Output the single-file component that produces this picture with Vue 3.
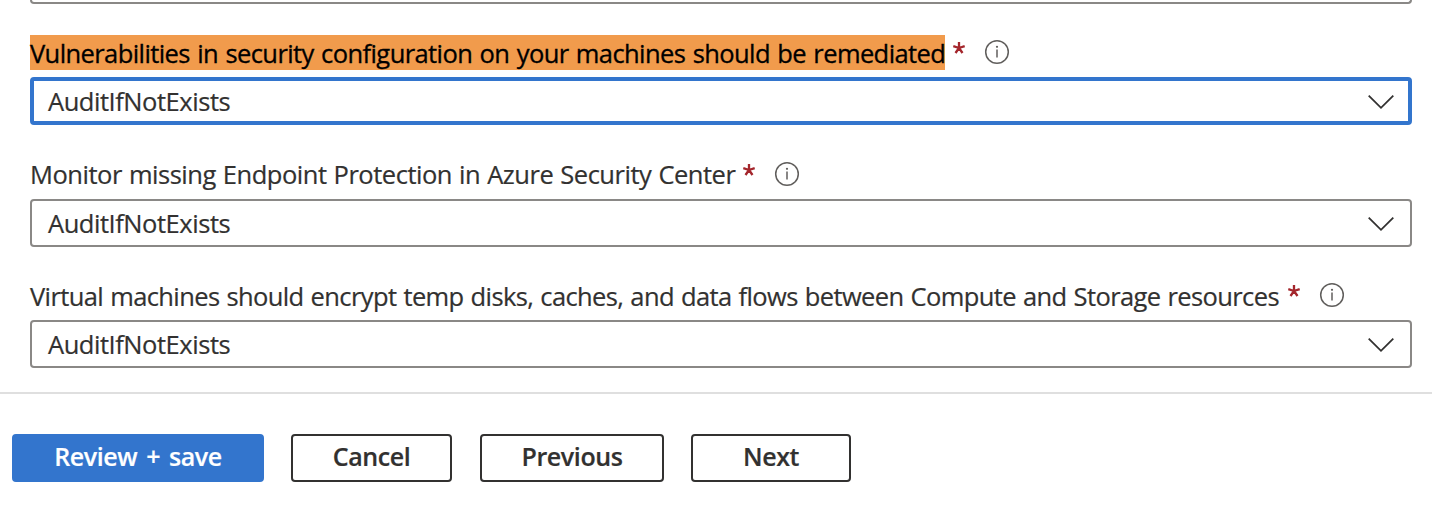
<script setup>
const fields = [
  { id: 'vuln', label: 'Vulnerabilities in security configuration on your machines should be remediated', value: 'AuditIfNotExists', active: true },
  { id: 'endpoint', label: 'Monitor missing Endpoint Protection in Azure Security Center', value: 'AuditIfNotExists' },
  { id: 'disks', label: 'Virtual machines should encrypt temp disks, caches, and data flows between Compute and Storage resources', value: 'AuditIfNotExists' },
]
const buttons = [
  { id: 'save', text: 'Review + save' },
  { id: 'cancel', text: 'Cancel' },
  { id: 'previous', text: 'Previous' },
  { id: 'next', text: 'Next' },
]
</script>

<template>
  <main class="page">
    <section class="form">
      <div class="previous-field"></div>
      <div v-for="f in fields" :key="f.id" class="field" :class="f.id">
        <div class="label-row">
          <span class="label" :class="{ found: f.active }">{{ f.label }}</span>
          <svg class="required" viewBox="0 0 14 14">
            <path d="M7 7V1M7 7L1.3 5.2M7 7L12.7 5.2M7 7L3.5 12M7 7L10.5 12" />
          </svg>
          <svg class="info" viewBox="0 0 26 26">
            <circle cx="13" cy="13" r="11.3" />
            <path d="M13 10.5v7.9" />
            <circle class="dot" cx="13" cy="7.8" r="1.1" />
          </svg>
        </div>
        <div class="select" :class="{ active: f.active }">
          <span class="value">{{ f.value }}</span>
          <svg class="chevron" viewBox="0 0 28 16"><path d="M1.7 1.7L14 13.8L26.3 1.7" /></svg>
        </div>
      </div>
    </section>
    <footer class="footer">
      <button v-for="b in buttons" :key="b.id" class="button" :class="b.id">
        <span>{{ b.text }}</span>
      </button>
    </footer>
  </main>
</template>

<style>
body { background: #fff; }
</style>

<style scoped>
.page {
  height: 506px;
  overflow: hidden;
  background: #fff;
  color: #323130;
  font-family: "Open Sans", "Noto Sans", sans-serif;
  font-size: 25.5px;
}
.form {
  box-sizing: border-box;
  height: 394px;
  padding: 0 20px 0 30px;
  border-bottom: 2px solid #dfdfdf;
}
.previous-field {
  box-sizing: border-box;
  height: 4px;
  border: 2px solid #8a8886;
  border-top: 0;
  border-radius: 0 0 4px 4px;
}
.label-row {
  display: flex;
  height: 35px;
  padding-bottom: 7px;
  white-space: nowrap;
}
.field.vuln { padding-top: 31px; }
.field.endpoint { padding-top: 32px; }
.field.disks { padding-top: 31px; }
.label {
  height: 35px;
  line-height: 36px;
  -webkit-text-stroke: 0.2px currentColor;
}
.found {
  background: #f19b4c;
  color: #000;
  -webkit-text-stroke-width: 0.3px;
}
.vuln .label { width: 915px; letter-spacing: -0.59px; word-spacing: 1.3px; }
.endpoint .label { width: 705px; line-height: 34px; letter-spacing: -0.48px; word-spacing: 0.9px; }
.disks .label { width: 1250px; letter-spacing: -0.61px; word-spacing: 1px; }
.required {
  width: 14px;
  height: 14px;
  margin: 6px 0 0 7px;
  fill: none;
  stroke: #a4262c;
  stroke-width: 2.3;
}
.info {
  width: 26px;
  height: 26px;
  margin: 4px 0 0 18px;
  fill: none;
  stroke: #605e5c;
  stroke-width: 1.5;
}
.info .dot { fill: #605e5c; stroke: none; }
.select {
  box-sizing: border-box;
  display: flex;
  align-items: center;
  justify-content: space-between;
  height: 48px;
  padding: 0 15px 0 16px;
  border: 2px solid #8a8886;
  border-radius: 4px;
}
.select.active {
  padding: 0 13px 0 14px;
  border: 4px solid #3375cd;
}
.value {
  line-height: 36px;
  letter-spacing: -0.46px;
  -webkit-text-stroke: 0.2px currentColor;
}
.chevron {
  width: 28px;
  height: 16px;
  margin-top: 1px;
  fill: none;
  stroke: #323130;
  stroke-width: 1.8;
}
.footer {
  display: flex;
  padding: 40px 0 0 12px;
}
.button {
  box-sizing: border-box;
  height: 48px;
  padding: 0 0 3px;
  border: 2px solid #323130;
  border-radius: 4px;
  background: #fff;
  color: #323130;
  font: 600 25px/41px "Open Sans", "Noto Sans", sans-serif;
  letter-spacing: -0.4px;
  word-spacing: 2.8px;
  white-space: nowrap;
  -webkit-text-stroke: 0.2px currentColor;
}
.save { width: 252px; margin-right: 27px; border-color: #3375cd; background: #3375cd; color: #fff; }
.cancel { width: 161px; margin-right: 28px; }
.previous { width: 184px; margin-right: 27px; }
.next { width: 160px; }
</style>
